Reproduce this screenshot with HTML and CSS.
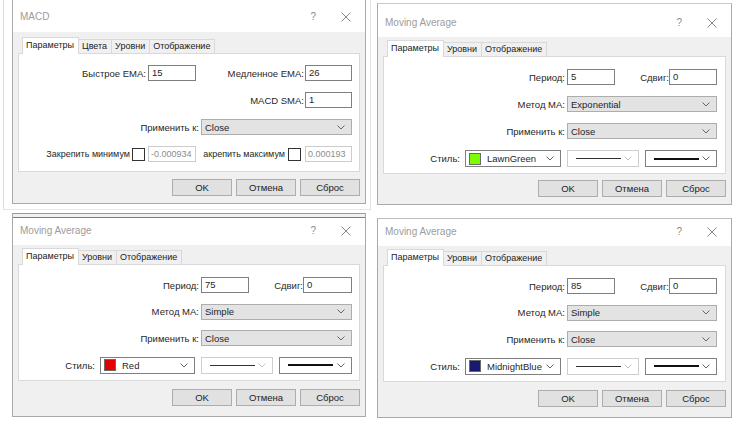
FILE: index.html
```html
<!DOCTYPE html>
<html lang="ru">
<head>
<meta charset="utf-8">
<title>Dialogs</title>
<link rel="stylesheet" href="styles.css">
</head>
<body>
<main class="sheet">

  <!-- MACD -->
  <div class="cell cell-tl">
    <section class="dlg dlg-tl">
      <header class="dlg-title">
        <span class="dlg-name">MACD</span>
        <span class="dlg-help">?</span>
        <svg class="dlg-close" viewBox="0 0 10 10"><path d="M0.5 0.5L9.5 9.5M9.5 0.5L0.5 9.5"/></svg>
      </header>
      <div class="dlg-body">
        <div class="tabs">
          <span class="tab active">Параметры</span><span class="tab">Цвета</span><span class="tab">Уровни</span><span class="tab">Отображение</span>
        </div>
        <div class="panel panel-macd">
          <div class="row">
            <span class="lbl">Быстрое EMA:</span><span class="edit w48">15</span>
            <span class="lbl box109">Медленное EMA:</span><span class="edit w47">26</span>
          </div>
          <div class="row">
            <span class="lbl box109">MACD SMA:</span><span class="edit w47">1</span>
          </div>
          <div class="row">
            <span class="lbl">Применить к:</span><span class="combo w151">Close<svg class="chev" viewBox="0 0 8 5"><path d="M0.5 0.5L4 4L7.5 0.5"/></svg></span>
          </div>
          <div class="row row-lock">
            <span class="lbl">Закрепить минимум</span><span class="cb"></span><span class="edit dis w48 gap3">-0.000934</span>
            <span class="lbl-cb box109"><span class="lbl">акрепить максимум</span><span class="cb"></span></span><span class="edit dis w47">0.000193</span>
          </div>
        </div>
        <div class="btns">
          <span class="btn">OK</span><span class="btn">Отмена</span><span class="btn">Сброс</span>
        </div>
      </div>
    </section>
  </div>

  <!-- Moving Average: LawnGreen -->
  <div class="cell cell-tr">
    <section class="dlg dlg-tr">
      <header class="dlg-title">
        <span class="dlg-name">Moving Average</span>
        <span class="dlg-help">?</span>
        <svg class="dlg-close" viewBox="0 0 10 10"><path d="M0.5 0.5L9.5 9.5M9.5 0.5L0.5 9.5"/></svg>
      </header>
      <div class="dlg-body">
        <div class="tabs">
          <span class="tab active">Параметры</span><span class="tab">Уровни</span><span class="tab">Отображение</span>
        </div>
        <div class="panel panel-ma panel-right">
          <div class="row">
            <span class="lbl">Период:</span><span class="edit w48">5</span>
            <span class="lbl box54">Сдвиг:</span><span class="edit w48">0</span>
          </div>
          <div class="row">
            <span class="lbl">Метод MA:</span><span class="combo w150">Exponential<svg class="chev" viewBox="0 0 8 5"><path d="M0.5 0.5L4 4L7.5 0.5"/></svg></span>
          </div>
          <div class="row">
            <span class="lbl">Применить к:</span><span class="combo w150">Close<svg class="chev" viewBox="0 0 8 5"><path d="M0.5 0.5L4 4L7.5 0.5"/></svg></span>
          </div>
          <div class="row row-style">
            <span class="lbl">Стиль:</span>
            <span class="cpick"><i class="sw sw-green"></i><span class="cname">LawnGreen</span><svg class="chev" viewBox="0 0 8 5"><path d="M0.5 0.5L4 4L7.5 0.5"/></svg></span>
            <span class="lpick dis"><i class="ln"></i><svg class="chev" viewBox="0 0 8 5"><path d="M0.5 0.5L4 4L7.5 0.5"/></svg></span>
            <span class="lpick"><i class="ln thick"></i><svg class="chev" viewBox="0 0 8 5"><path d="M0.5 0.5L4 4L7.5 0.5"/></svg></span>
          </div>
        </div>
        <div class="btns">
          <span class="btn">OK</span><span class="btn">Отмена</span><span class="btn">Сброс</span>
        </div>
      </div>
    </section>
  </div>

  <!-- Moving Average: Red -->
  <div class="cell cell-bl">
    <section class="dlg dlg-bl">
      <header class="dlg-title">
        <span class="dlg-name">Moving Average</span>
        <span class="dlg-help">?</span>
        <svg class="dlg-close" viewBox="0 0 10 10"><path d="M0.5 0.5L9.5 9.5M9.5 0.5L0.5 9.5"/></svg>
      </header>
      <div class="dlg-body">
        <div class="tabs">
          <span class="tab active">Параметры</span><span class="tab">Уровни</span><span class="tab">Отображение</span>
        </div>
        <div class="panel panel-ma panel-low">
          <div class="row">
            <span class="lbl">Период:</span><span class="edit w48">75</span>
            <span class="lbl box54">Сдвиг:</span><span class="edit w49">0</span>
          </div>
          <div class="row">
            <span class="lbl">Метод MA:</span><span class="combo w151">Simple<svg class="chev" viewBox="0 0 8 5"><path d="M0.5 0.5L4 4L7.5 0.5"/></svg></span>
          </div>
          <div class="row">
            <span class="lbl">Применить к:</span><span class="combo w151">Close<svg class="chev" viewBox="0 0 8 5"><path d="M0.5 0.5L4 4L7.5 0.5"/></svg></span>
          </div>
          <div class="row row-style">
            <span class="lbl">Стиль:</span>
            <span class="cpick"><i class="sw sw-red"></i><span class="cname">Red</span><svg class="chev" viewBox="0 0 8 5"><path d="M0.5 0.5L4 4L7.5 0.5"/></svg></span>
            <span class="lpick dis"><i class="ln"></i><svg class="chev" viewBox="0 0 8 5"><path d="M0.5 0.5L4 4L7.5 0.5"/></svg></span>
            <span class="lpick w73"><i class="ln thick"></i><svg class="chev" viewBox="0 0 8 5"><path d="M0.5 0.5L4 4L7.5 0.5"/></svg></span>
          </div>
        </div>
        <div class="btns btns-low">
          <span class="btn">OK</span><span class="btn">Отмена</span><span class="btn">Сброс</span>
        </div>
      </div>
    </section>
  </div>

  <!-- Moving Average: MidnightBlue -->
  <div class="cell cell-br">
    <section class="dlg dlg-br">
      <header class="dlg-title">
        <span class="dlg-name">Moving Average</span>
        <span class="dlg-help">?</span>
        <svg class="dlg-close" viewBox="0 0 10 10"><path d="M0.5 0.5L9.5 9.5M9.5 0.5L0.5 9.5"/></svg>
      </header>
      <div class="dlg-body">
        <div class="tabs">
          <span class="tab active">Параметры</span><span class="tab">Уровни</span><span class="tab">Отображение</span>
        </div>
        <div class="panel panel-ma panel-right panel-low">
          <div class="row">
            <span class="lbl">Период:</span><span class="edit w48">85</span>
            <span class="lbl box54">Сдвиг:</span><span class="edit w48">0</span>
          </div>
          <div class="row">
            <span class="lbl">Метод MA:</span><span class="combo w150">Simple<svg class="chev" viewBox="0 0 8 5"><path d="M0.5 0.5L4 4L7.5 0.5"/></svg></span>
          </div>
          <div class="row">
            <span class="lbl">Применить к:</span><span class="combo w150">Close<svg class="chev" viewBox="0 0 8 5"><path d="M0.5 0.5L4 4L7.5 0.5"/></svg></span>
          </div>
          <div class="row row-style">
            <span class="lbl">Стиль:</span>
            <span class="cpick"><i class="sw sw-blue"></i><span class="cname">MidnightBlue</span><svg class="chev" viewBox="0 0 8 5"><path d="M0.5 0.5L4 4L7.5 0.5"/></svg></span>
            <span class="lpick dis"><i class="ln"></i><svg class="chev" viewBox="0 0 8 5"><path d="M0.5 0.5L4 4L7.5 0.5"/></svg></span>
            <span class="lpick"><i class="ln thick"></i><svg class="chev" viewBox="0 0 8 5"><path d="M0.5 0.5L4 4L7.5 0.5"/></svg></span>
          </div>
        </div>
        <div class="btns btns-low">
          <span class="btn">OK</span><span class="btn">Отмена</span><span class="btn">Сброс</span>
        </div>
      </div>
    </section>
  </div>

</main>
</body>
</html>
```

FILE: styles.css
```css
* { box-sizing: border-box; }

html, body {
  margin: 0;
  padding: 0;
  background: #ffffff;
}

body {
  font-family: "Liberation Sans", Arial, sans-serif;
  font-size: 9.5px;
  color: #1f1f1f;
  width: 740px;
  height: 427px;
  overflow: hidden;
}

/* ---------- sheet of four screenshots ---------- */
.sheet {
  display: grid;
  grid-template-columns: 368px 369px;
  grid-template-rows: 210px 217px;
  padding-left: 3px;
  align-items: start;
}

.cell { height: 100%; }

.cell-tl {
  border-left: 1px solid #dcdcdc;
  border-right: 1px solid #e2e2e2;
  border-bottom: 1px solid #e6e6e6;
  padding-left: 8px;
}

.cell-tr { padding-left: 6px; }

.cell-bl { padding-left: 9px; }

.cell-br { padding-left: 6px; }

/* ---------- dialog ---------- */
.dlg {
  background: #f0f0f0;
  border: 1px solid #a9a9a9;
  display: flex;
  flex-direction: column;
}

.dlg-tl { width: 354px; border-top: none; }
.dlg-tr { width: 355px; margin-top: 3px; border-top-color: #c9c9c9; }
.dlg-bl { width: 354px; margin-top: 3px; border-top-color: #9a9a9a; }
.dlg-br { width: 355px; margin-top: 8px; border-top-color: #bdbdbd; }

.dlg-title {
  background: #ffffff;
  display: flex;
  align-items: center;
  height: 32px;
  padding-left: 7px;
  line-height: 14px;
}

.dlg-tl .dlg-title { padding-top: 1px; }
.dlg-tr .dlg-title { height: 33px; padding-top: 5px; }
.dlg-bl .dlg-title { height: 28px; margin-top: 3px; border-top: 1px solid #7c7c7c; padding-bottom: 1px; }
.dlg-br .dlg-title { height: 27px; padding-bottom: 1px; }

.dlg-name {
  flex: 1;
  color: #9c9c9c;
  font-size: 10px;
}

.dlg-help {
  color: #8c8c8c;
  font-size: 10px;
  margin-right: 25px;
}

.dlg-close {
  width: 10px;
  height: 10px;
  margin-right: 14px;
}

.dlg-close path {
  stroke: #8a8a8a;
  stroke-width: 1;
  fill: none;
}

.dlg-body {
  padding: 5px 5px 7px;
  display: flex;
  flex-direction: column;
}

.dlg-tr .dlg-body { padding-top: 3px; }
.dlg-bl .dlg-body, .dlg-br .dlg-body { padding-top: 3px; padding-bottom: 10px; }

/* ---------- tabs ---------- */
.tabs {
  display: flex;
  align-items: flex-end;
  height: 16px;
  margin-left: 4px;
  position: relative;
  z-index: 1;
  font-size: 9px;
}

.tab {
  height: 14px;
  line-height: 13px;
  padding: 0 4px 0 3px;
  border: 1px solid #d9d9d9;
  border-bottom: none;
  border-left: none;
  background: #f0f0f0;
  color: #222;
}

.tab.active {
  height: 17px;
  line-height: 15px;
  background: #ffffff;
  border-left: 1px solid #d9d9d9;
  margin-bottom: -1px;
  padding: 0 4px 0 3px;
}

/* ---------- panel ---------- */
.panel {
  background: #ffffff;
  border: 1px solid #d9d9d9;
  display: flex;
  flex-direction: column;
  gap: 11px;
  padding: 11px 7px 9px 0;
}

.panel-right { padding-right: 8px; }
.dlg-tr .panel { padding-top: 12px; padding-bottom: 6px; }

.panel-low {
  gap: 10.5px;
  padding-top: 12px;
  padding-bottom: 6.5px;
}

.row {
  display: flex;
  justify-content: flex-end;
  align-items: center;
  height: 16px;
}

.row-style { height: 17px; }

.row-lock { font-size: 9px; }

.lbl {
  white-space: nowrap;
  margin-right: 2px;
  color: #1f1f1f;
}

.row-style > .lbl { margin-right: 5px; }

.box109 {
  width: 109px;
  text-align: right;
  padding-right: 1px;
  margin-right: 0;
  flex: none;
}

.box54 {
  width: 54px;
  text-align: right;
  padding-right: 0;
  margin-right: 0;
  flex: none;
}

.lbl-cb {
  display: flex;
  justify-content: flex-end;
  align-items: center;
  padding-right: 4px;
}

.lbl-cb .lbl { margin-right: 3px; }

/* ---------- controls ---------- */
.edit {
  height: 16px;
  line-height: 14px;
  border: 1px solid #7f7f7f;
  background: #ffffff;
  padding-left: 3px;
  color: #1f1f1f;
  flex: none;
  white-space: nowrap;
  overflow: hidden;
}

.edit.dis {
  border-color: #cccccc;
  color: #8d8d8d;
  padding-left: 2px;
}

.gap3 { margin-left: 3px; }

.w47 { width: 47px; }
.w48 { width: 48px; }
.w49 { width: 49px; }
.w150 { width: 150px; }
.w151 { width: 151px; }

.cb {
  width: 13px;
  height: 13px;
  border: 1px solid #333333;
  background: #ffffff;
  flex: none;
}

.combo {
  height: 16px;
  border: 1px solid #adadad;
  background: #e3e3e3;
  display: flex;
  align-items: center;
  padding-left: 3px;
  padding-right: 6px;
  flex: none;
}

.chev {
  width: 8px;
  height: 5px;
  margin-left: auto;
  flex: none;
}

.chev path {
  fill: none;
  stroke: #666666;
  stroke-width: 1;
}

.cpick {
  width: 95px;
  height: 17px;
  border: 1px solid #7f7f7f;
  background: #ffffff;
  display: flex;
  align-items: center;
  padding-left: 3px;
  padding-right: 6px;
  margin-right: 6px;
  flex: none;
}

.panel-right .cpick { width: 96px; }

.sw {
  width: 12px;
  height: 12px;
  border: 1px solid #6a6a6a;
  margin-right: 6px;
  flex: none;
}

.sw-green { background: #7cfc00; }
.sw-red { background: #e30000; }
.sw-blue { background: #191970; }

.cname { white-space: nowrap; }

.lpick {
  width: 72px;
  height: 17px;
  border: 1px solid #7f7f7f;
  background: #ffffff;
  display: flex;
  align-items: center;
  padding-left: 8px;
  padding-right: 6px;
  flex: none;
}

.lpick.dis {
  border-color: #cfcfcf;
  margin-right: 6px;
}

.lpick.dis .chev path { stroke: #c4c4c4; }

.w73 { width: 73px; }

.ln {
  display: block;
  width: 45px;
  height: 1px;
  background: #333333;
}

.ln.thick {
  height: 2px;
  background: #111111;
}

/* ---------- buttons ---------- */
.btns {
  display: flex;
  justify-content: flex-end;
  gap: 4px;
  margin-top: 7px;
}

.dlg-tr .btns { margin-top: 6px; }
.btns-low { margin-top: 8px; }

.btn {
  width: 60px;
  height: 17px;
  line-height: 15px;
  text-align: center;
  background: #e1e1e1;
  border: 1px solid #adadad;
  color: #222;
}
```
